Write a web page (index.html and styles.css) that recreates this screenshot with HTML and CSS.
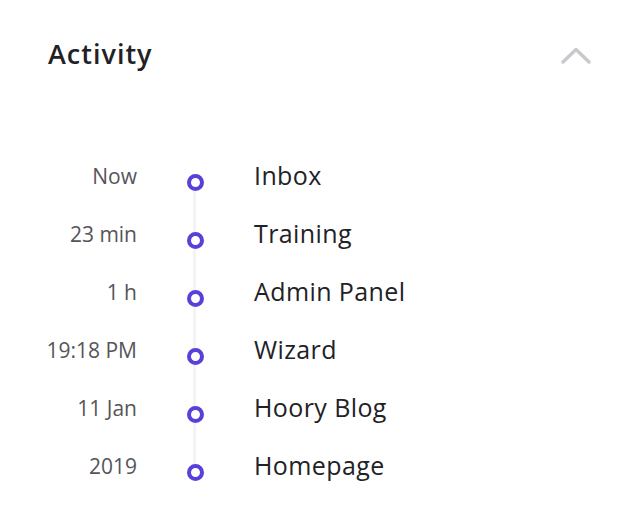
FILE: index.html
```html
<!DOCTYPE html>
<html lang="en">
<head>
    <meta charset="UTF-8">
    <meta name="viewport" content="width=device-width, initial-scale=1.0">
    <title>Activity</title>
    <link rel="stylesheet" href="styles.css">
</head>
<body>
    <div class="card">
        <div class="card-header">
            <h2>Activity</h2>
            <svg class="toggle" width="32" height="18" viewBox="0 0 32 18">
                <polyline points="3,15 16,2.5 29,15" fill="none" stroke="#c9c9cd" stroke-width="3.5" stroke-linecap="round" stroke-linejoin="round"/>
            </svg>
        </div>

        <ul class="timeline">
            <li class="timeline-item">
                <span class="time">Now</span>
                <span class="dot-col"><span class="dot"></span></span>
                <span class="name">Inbox</span>
            </li>
            <li class="timeline-item">
                <span class="time">23 min</span>
                <span class="dot-col"><span class="dot"></span></span>
                <span class="name">Training</span>
            </li>
            <li class="timeline-item">
                <span class="time">1 h</span>
                <span class="dot-col"><span class="dot"></span></span>
                <span class="name">Admin Panel</span>
            </li>
            <li class="timeline-item">
                <span class="time">19:18 PM</span>
                <span class="dot-col"><span class="dot"></span></span>
                <span class="name">Wizard</span>
            </li>
            <li class="timeline-item">
                <span class="time">11 Jan</span>
                <span class="dot-col"><span class="dot"></span></span>
                <span class="name">Hoory Blog</span>
            </li>
            <li class="timeline-item">
                <span class="time">2019</span>
                <span class="dot-col"><span class="dot"></span></span>
                <span class="name">Homepage</span>
            </li>
        </ul>
    </div>
</body>
</html>
```

FILE: styles.css
```css
body {
    margin: 0;
    background-color: #fff;
    font-family: "Open Sans", Lato, sans-serif;
}
.card {
    padding: 38px 48px 0 48px;
}
.card-header {
    display: flex;
    justify-content: space-between;
    align-items: flex-start;
}
.card-header h2 {
    margin: 0;
    font-size: 27px;
    line-height: 32px;
    font-weight: 600;
    letter-spacing: 1px;
    color: #222226;
}
.toggle {
    margin-top: 9px;
}
.timeline {
    position: relative;
    list-style: none;
    margin: 90px 0 0 0;
    padding: 0;
}
/* vertical line behind the dots */
.timeline::before {
    content: "";
    position: absolute;
    left: 145px;
    top: 24px;
    bottom: 34px;
    width: 3px;
    background-color: #f4f4f7;
}
.timeline-item {
    position: relative;
    display: flex;
    align-items: flex-start;
    height: 58px;
}
.time {
    display: flex;
    justify-content: flex-end;
    flex-shrink: 0;
    width: 89px;
    padding-top: 1px;
    white-space: nowrap;
    font-size: 21px;
    line-height: 30px;
    color: #55555a;
}
.dot-col {
    width: 117px;
    flex-shrink: 0;
    display: flex;
    justify-content: center;
    padding-top: 14px;
}
.dot {
    width: 9px;
    height: 9px;
    border: 4px solid #5b3fd9;
    border-radius: 50%;
    background-color: #fff;
}
.name {
    font-size: 25px;
    line-height: 30px;
    letter-spacing: 0.4px;
    color: #222226;
}
```
